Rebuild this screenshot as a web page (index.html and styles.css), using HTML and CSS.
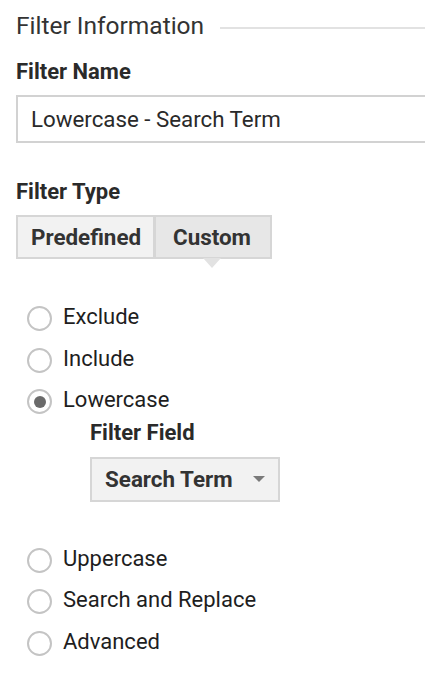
FILE: index.html
```html
<!DOCTYPE html>
<html>
<head>
<meta charset="utf-8">
<link rel="stylesheet" href="styles.css">
</head>
<body>
<div class="page">
  <div class="section-head">
    <span class="section-title">Filter Information</span>
    <span class="section-rule"></span>
  </div>
  <div class="label label-name">Filter Name</div>
  <div class="text-input">Lowercase - Search Term</div>
  <div class="label label-type">Filter Type</div>
  <div class="toggle">
    <div class="toggle-btn">Predefined</div>
    <div class="toggle-btn active">Custom</div>
  </div>
  <div class="radios">
    <div class="radio-row"><span class="radio"></span><span class="radio-label">Exclude</span></div>
    <div class="radio-row"><span class="radio"></span><span class="radio-label">Include</span></div>
    <div class="radio-row"><span class="radio checked"></span><span class="radio-label">Lowercase</span></div>
    <div class="sub">
      <div class="label">Filter Field</div>
      <div class="select"><span>Search Term</span><span class="caret"></span></div>
    </div>
    <div class="radio-row"><span class="radio"></span><span class="radio-label">Uppercase</span></div>
    <div class="radio-row"><span class="radio"></span><span class="radio-label">Search and Replace</span></div>
    <div class="radio-row"><span class="radio"></span><span class="radio-label">Advanced</span></div>
  </div>
</div>
</body>
</html>
```

FILE: styles.css
```css
html, body {
  margin: 0;
  padding: 0;
  background: #ffffff;
}
body {
  font-family: Roboto, "Noto Sans", sans-serif;
  color: #222;
  width: 425px;
  height: 681px;
  overflow: hidden;
}
.page {
  padding: 12px 0 0 16px;
}
.section-head {
  display: flex;
  align-items: center;
  gap: 16px;
  height: 28px;
}
.section-title {
  font-size: 24.5px;
  line-height: 28px;
  color: #333;
  white-space: nowrap;
}
.section-rule {
  flex: 1;
  height: 2px;
  background: #e2e2e2;
  margin-top: 4px;
}
.label {
  font-size: 22px;
  line-height: 24px;
  font-weight: 700;
  color: #2a2a2a;
}
.label-name {
  margin-top: 20px;
}
.text-input {
  margin-top: 11px;
  height: 48px;
  box-sizing: border-box;
  border: 2px solid #d2d2d2;
  border-right: none;
  padding-left: 13px;
  font-size: 22.3px;
  line-height: 44px;
  color: #2a2a2a;
}
.label-type {
  margin-top: 37px;
}
.toggle {
  margin-top: 11px;
  display: flex;
}
.toggle-btn {
  position: relative;
  height: 44px;
  box-sizing: border-box;
  border: 2px solid #d6d6d6;
  background: #f2f2f2;
  font-size: 22.4px;
  font-weight: 700;
  line-height: 40px;
  color: #333;
  padding: 0 13px;
}
.toggle-btn:first-child {
  width: 139px;
}
.toggle-btn.active {
  width: 117px;
  background: #e7e7e7;
  border-left-width: 1px;
  padding-left: 17px;
}
.toggle-btn.active::after {
  content: "";
  position: absolute;
  left: 47px;
  bottom: -11px;
  width: 0;
  height: 0;
  border-left: 9px solid transparent;
  border-right: 9px solid transparent;
  border-top: 10px solid #e2e2e2;
}
.radios {
  margin-top: 39px;
}
.radio-row {
  display: flex;
  align-items: center;
  height: 41.5px;
}
.radio {
  width: 25px;
  height: 25px;
  box-sizing: border-box;
  border: 2px solid #c4c4c4;
  border-radius: 50%;
  margin-left: 11px;
  display: flex;
  align-items: center;
  justify-content: center;
}
.radio.checked::after {
  content: "";
  width: 12px;
  height: 12px;
  border-radius: 50%;
  background: #6a6a6a;
}
.radio-label {
  margin-left: 11px;
  margin-bottom: 4px;
  font-size: 22px;
  color: #1e1e1e;
}
.sub {
  padding-left: 74px;
  padding-bottom: 38px;
}
.sub .label {
  margin-top: -2px;
}
.select {
  margin-top: 12px;
  width: 190px;
  height: 45px;
  box-sizing: border-box;
  border: 2px solid #d6d6d6;
  background: #f2f2f2;
  display: flex;
  align-items: center;
  justify-content: space-between;
  padding: 0 13px 0 13px;
  font-size: 22.4px;
  font-weight: 700;
  color: #333;
}
.caret {
  width: 0;
  height: 0;
  border-left: 6px solid transparent;
  border-right: 6px solid transparent;
  border-top: 6px solid #7a7a7a;
}
```
